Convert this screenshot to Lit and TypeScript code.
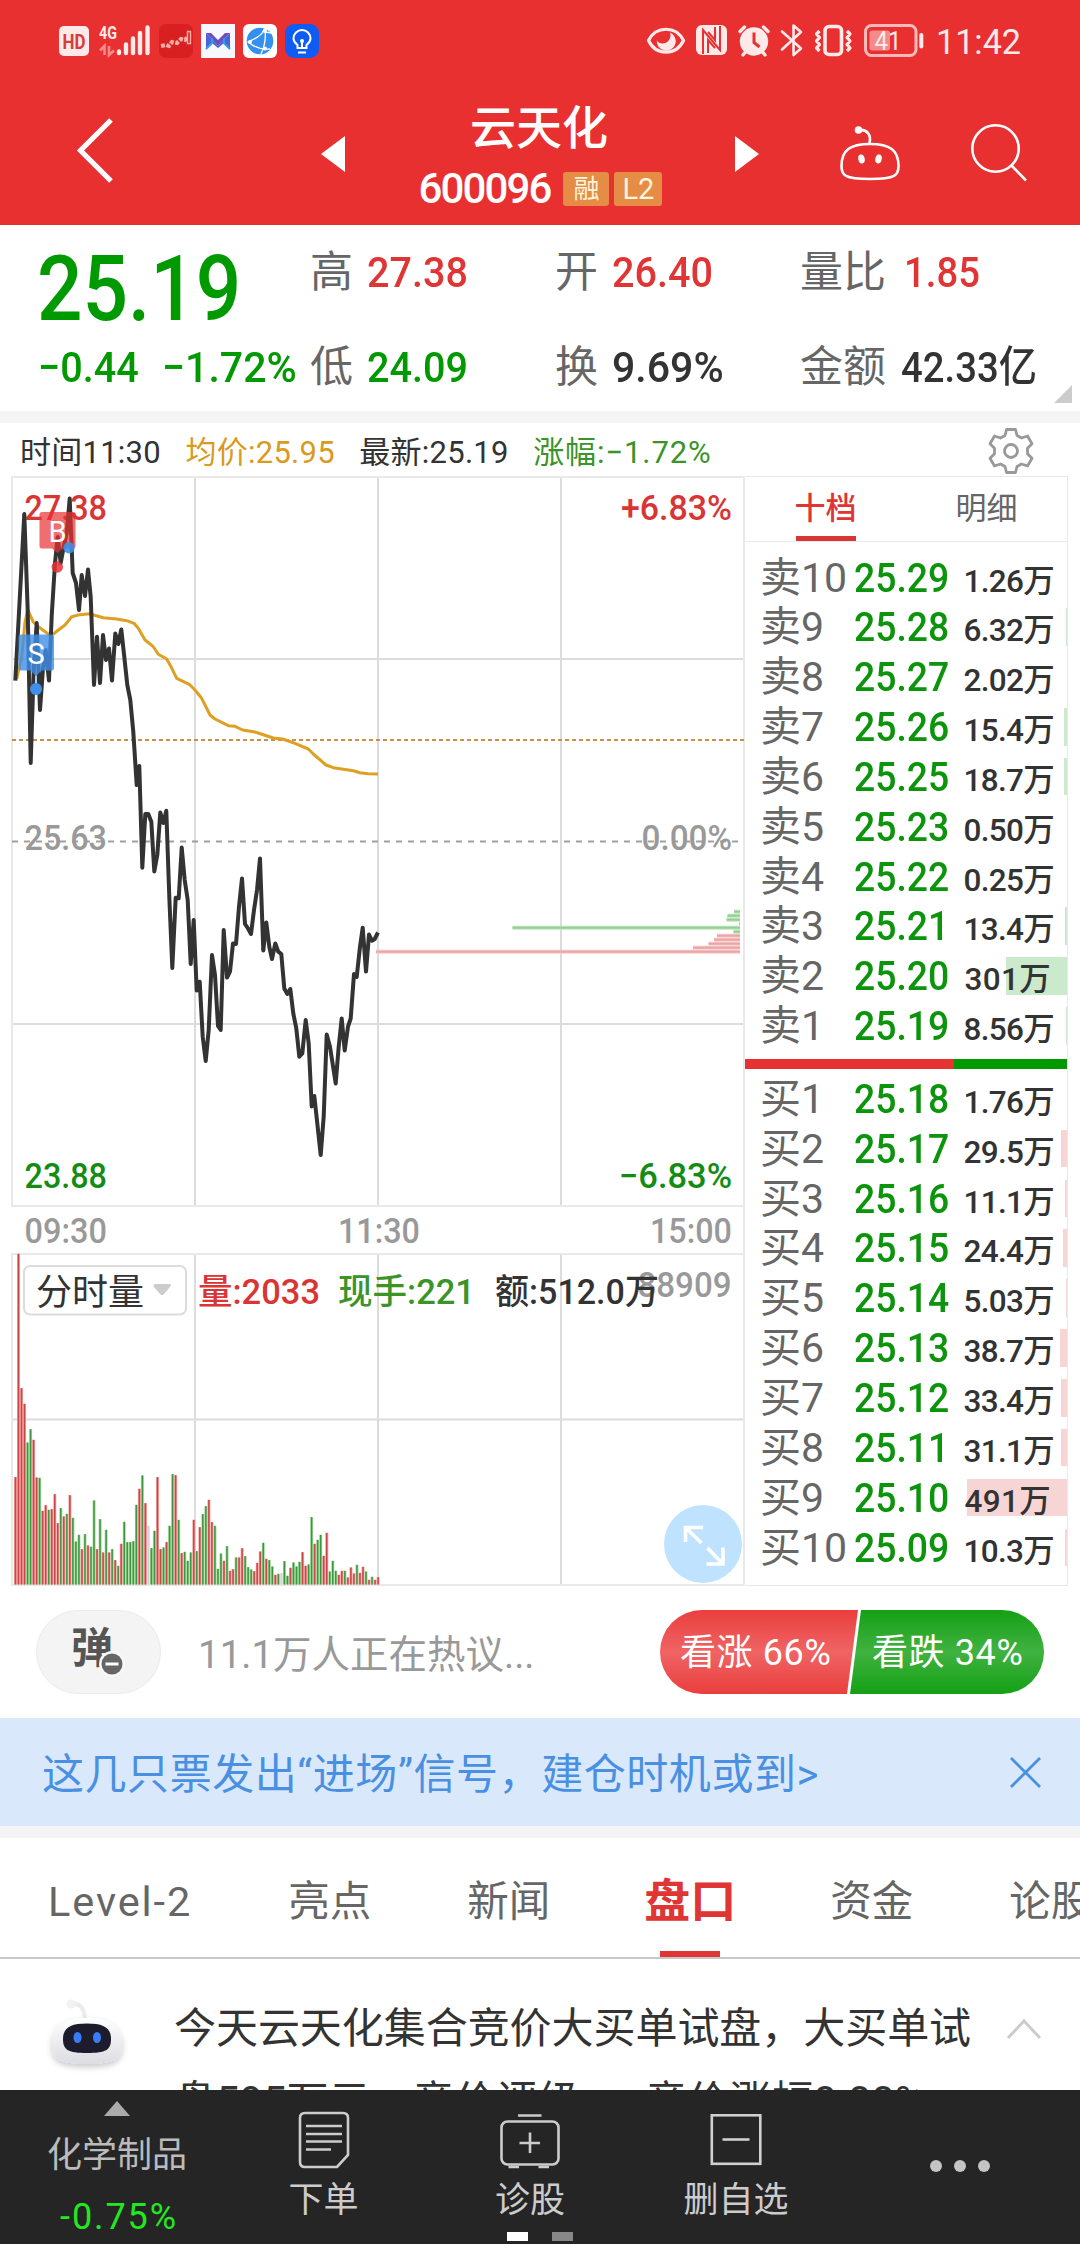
import { LitElement, html, svg, css, nothing } from "lit";
import { customElement } from "lit/decorators.js";
import { classMap } from "lit/directives/class-map.js";

/* ---------- shared styles ---------- */

const base = css`
  :host {
    display: block;
    box-sizing: border-box;
    font-family: Roboto, "Noto Sans CJK SC", sans-serif;
    color: #333;
  }
  * {
    box-sizing: border-box;
  }
  svg {
    display: block;
    flex: none;
  }
  .narrow {
    display: inline-block;
    white-space: nowrap;
    transform: scaleX(0.92);
    transform-origin: 0 50%;
  }
`;

/* ---------- header ---------- */

@customElement("stock-header")
class StockHeader extends LitElement {
  static styles = [
    base,
    css`
      :host {
        height: 225px;
        background: #e83030;
        color: #fff;
      }
      .status {
        display: flex;
        justify-content: space-between;
        align-items: center;
        height: 82px;
        padding: 0 58px 0 59px;
      }
      .nav {
        display: grid;
        grid-template-columns: 321px 24px 390px 24px 81px 60px 70px 110px;
        align-items: center;
        height: 143px;
      }
      .back {
        margin-left: 74px;
        margin-top: -7px;
      }
      .robot {
        grid-column: 6;
        margin: -2px 0 0 -1px;
      }
      .search {
        grid-column: 8;
        margin-top: -2px;
      }
      .title {
        display: flex;
        flex-direction: column;
        align-items: center;
      }
      .name {
        font-size: 46px;
        font-weight: 500;
        line-height: 62px;
        margin: 8px 2px 0 0;
      }
      .code {
        display: flex;
        align-items: center;
        height: 60px;
        margin-left: 1px;
      }
      .digits {
        font-size: 42px;
        font-weight: 500;
        letter-spacing: -1.900px;
        margin-right: 13px;
      }
      .badge {
        height: 34px;
        border-radius: 3px;
        background: #e58c45;
        color: #fff4dc;
        font-size: 26px;
        line-height: 35px;
        text-align: center;
        width: 46px;
        margin-right: 5px;
      }
      .badge.level {
        font-size: 29px;
        width: 48px;
        margin-right: 0;
      }
    `,
  ];

  render() {
    return html`
      <div class="status">
        <svg width="262" height="36" viewBox="59 23 262 36">
          <rect x="59" y="26" width="30" height="30" rx="5" fill="#ffe9e9" />
          <text x="74" y="49" font-size="20" font-weight="700" fill="#d93a3a" text-anchor="middle" textLength="23" lengthAdjust="spacingAndGlyphs">HD</text>
          <text x="99" y="38.500" font-size="18" font-weight="700" fill="#ffe9e9" textLength="18" lengthAdjust="spacingAndGlyphs">4G</text>
          <path d="M104.500 55V46L100 50.500M109 46V55L114 50.500" fill="none" stroke="#f58a8a" stroke-width="2.600" />
          <path d="M119 51.500V53M126 44.500V53M133 38.500V53M140 33V53M147.500 27.500V53" stroke="#ffe9e9" stroke-width="4.400" stroke-linecap="round" />
          <rect x="159" y="24" width="34" height="34" rx="7" fill="#d92020" />
          <path d="M161 46L166 45 169 46 172 42 177 43 181 39 185 40 190 34" fill="none" stroke="#f7b0a8" stroke-width="4" stroke-dasharray="4 1.500" />
          <path d="M187.500 31.500h3v12h-3z" fill="#d92020" stroke="#f7b0a8" stroke-width="1.400" />
          <rect x="201" y="24" width="34" height="34" fill="#f7f8ff" />
          <path d="M206 49V33L218 46 230 33V49L224 43 218 48 212 43Z" fill="#4a63d8" />
          <path d="M206 33H211L218 40 225 33H230L218 46Z" fill="#6a4fc0" />
          <path d="M206 49L212 43V38M230 49L224 43V38" fill="none" stroke="#2f9be8" stroke-width="2" />
          <rect x="243" y="24" width="34" height="34" rx="6" fill="#fff" />
          <circle cx="260" cy="41" r="13.300" fill="#3390ee" />
          <path d="M247.500 42C256 39 262 35 265 29M248 42C254 47 262 50 270 49M265 30C266 37 265 45 261 54M262 31.500L272 33" fill="none" stroke="#fff" stroke-width="1.300" />
          <circle cx="265" cy="30.500" r="2" fill="#fff" /><circle cx="250" cy="42" r="2" fill="#fff" /><circle cx="265" cy="48.500" r="2" fill="#fff" />
          <rect x="285" y="24" width="34" height="34" rx="9" fill="#0f5cf5" />
          <path d="M297.500 48V45C295 43 293.500 41 293.500 38.500a8.500 8.500 0 0 1 17 0C310.500 41 309 43 306.500 45V48Z" fill="none" stroke="#fff" stroke-width="2" />
          <path d="M298 52.500H306M302 47V41" stroke="#fff" stroke-width="2" /><circle cx="302" cy="41" r="2" fill="#fff" />
        </svg>
        <svg width="375" height="36" viewBox="648 23 375 36">
          <g fill="none" stroke="#ffe9e9">
            <path d="M649.500 40.500C657 25.500 677 25.500 684.500 40.500 677 56 657 56 649.500 40.500Z" stroke-width="3.200" />
            <path d="M671 32.500a9.500 9.500 0 1 1-13.200 8c2 3.500 8 4 11 1 2.500-2.500 3.500-6 2.200-9Z" fill="#ffe9e9" stroke="none" />
            <rect x="697" y="25" width="31" height="30" rx="6" fill="#ffe9e9" stroke="none" />
            <path d="M704 54V30L721 50V26" stroke="#e83030" stroke-width="2" />
            <path d="M709 53V40L716 48M716 27V40L709 32" stroke="#e83030" stroke-width="2" />
            <circle cx="755" cy="41.500" r="14.200" fill="#ffe9e9" stroke="none" />
            <path d="M741 31.500L745.500 27M769 31.500L764.500 27M744 55L748 50M766 55L762 50" stroke-width="3.400" stroke-linecap="round" />
            <path d="M755 32.500V42.500L760.500 47" stroke="#e83030" stroke-width="3" />
            <path d="M783 31.500L802 48.500 794.500 55V25.500L802 32 783 49.500" stroke-width="2.600" stroke-linejoin="round" stroke-linecap="round" />
            <rect x="826" y="26.500" width="16.500" height="28" rx="4" stroke-width="3.600" />
            <path d="M820.500 31L817.500 34 820.500 37.500 817.500 41 820.500 44.500 817.500 48 820.500 51M848 31L851 34 848 37.500 851 41 848 44.500 851 48 848 51" stroke-width="3.200" stroke-linejoin="round" />
            <rect x="866.500" y="25.500" width="50.500" height="30" rx="6" stroke="#fbb9b9" stroke-width="3" />
            <rect x="870.500" y="30.500" width="20.500" height="20" rx="3" fill="#f58a8a" stroke="none" />
            <path d="M922.300 35V46.500" stroke-width="4" stroke-linecap="round" />
          </g>
          <text x="889" y="49.500" font-size="26" fill="#ffe9e9" text-anchor="middle" textLength="27" lengthAdjust="spacingAndGlyphs">41</text>
          <text x="937" y="54" font-size="35.500" fill="#ffe9e9" textLength="85" lengthAdjust="spacingAndGlyphs">11:42</text>
        </svg>
      </div>
      <div class="nav">
        <svg class="back" width="44" height="72" viewBox="74 114 44 72">
          <path d="M111 120L80.500 150.500 111 181" fill="none" stroke="#fff" stroke-width="5.200" />
        </svg>
        <svg width="24" height="36" viewBox="0 0 24 36"><path d="M24 0V36L0 18Z" fill="#fff" /></svg>
        <div class="title">
          <div class="name">云天化</div>
          <div class="code">
            <span class="digits">600096</span><span class="badge">融</span><span class="badge level">L2</span>
          </div>
        </div>
        <svg width="24" height="36" viewBox="0 0 24 36"><path d="M0 0V36L24 18Z" fill="#fff" /></svg>
        <svg class="robot" width="62" height="58" viewBox="839 125 62 58">
          <path d="M870 145C890 145 898.500 151 898.500 167 898.500 176 896 180 870 180S841.500 176 841.500 167C841.500 151 850 145 870 145Z" fill="none" stroke="#fff" stroke-width="2.600" />
          <path d="M859 131C867 130 871.500 136 869.500 144" fill="none" stroke="#fff" stroke-width="2.600" />
          <circle cx="858.500" cy="131" r="3.800" fill="#fff" />
          <ellipse cx="861.500" cy="160" rx="3.200" ry="4.500" fill="#fff" transform="rotate(-12 861.500 160)" />
          <ellipse cx="878.500" cy="160" rx="3.200" ry="4.500" fill="#fff" transform="rotate(12 878.500 160)" />
        </svg>
        <svg class="search" width="60" height="60" viewBox="969 123 60 60">
          <g fill="none" stroke="#fff" stroke-width="2.600"><circle cx="994.500" cy="148.500" r="23.200" /><path d="M1010.500 165.500L1025 180.500" /></g>
        </svg>
      </div>
    `;
  }
}

/* ---------- quote figures ---------- */

@customElement("quote-stats")
class QuoteStats extends LitElement {
  static styles = [
    base,
    css`
      :host {
        position: relative;
        height: 198px;
        padding: 4px 0 0 38px;
        border-bottom: 12px solid #f4f4f4;
        background: #fff;
      }
      .grid {
        display: grid;
        grid-template-columns: 272px 245px 245px 260px;
        grid-template-rows: 86px 100px;
      }
      .cell {
        display: flex;
        align-items: center;
        font-size: 43px;
        line-height: 50px;
        white-space: nowrap;
      }
      .top {
        height: 86px;
      }
      .low {
        height: 100px;
        padding-top: 4px;
      }
      .label {
        color: #666;
        margin-right: 14px;
      }
      .value {
        font-weight: 500;
      }
      .wide {
        transform: scaleX(0.955);
      }
      .tight {
        transform: scaleX(0.89);
        margin-left: 1px;
      }
      .ratio {
        transform: scaleX(0.89);
        margin-left: 4px;
      }
      .up {
        color: #e03535;
      }
      .down {
        color: #009900;
      }
      .price {
        font-size: 91px;
        font-weight: 500;
        line-height: 90px;
        transform: scaleX(0.88);
        padding-top: 33px;
        margin-left: -1px;
      }
      .change {
        display: grid;
        grid-template-columns: 124px 148px;
      }
      .corner {
        position: absolute;
        right: 8px;
        bottom: 8px;
      }
    `,
  ];

  render() {
    const cell = (label: string, value: string, tone: string, row: string) => html`
      <div class="cell ${row}"><span class="label">${label}</span><span class="value narrow ${tone}">${value}</span></div>
    `;
    return html`
      <div class="grid">
        <div class="cell top"><span class="narrow price down">25.19</span></div>
        ${cell("高", "27.38", "up", "top")} ${cell("开", "26.40", "up", "top")} ${cell("量比", "1.85", "up ratio", "top")}
        <div class="cell low change value down"><span class="narrow">−0.44</span><span class="narrow wide">−1.72%</span></div>
        ${cell("低", "24.09", "down", "low")} ${cell("换", "9.69%", "wide", "low")} ${cell("金额", "42.33亿", "tight", "low")}
      </div>
      <svg class="corner" width="18" height="18" viewBox="0 0 18 18"><path d="M18 0V18H0Z" fill="#ccc" /></svg>
    `;
  }
}

/* ---------- intraday chart ---------- */

type Point = [number, number];

const PRICE: Point[] = (
  "15.3,680.6 24.3,514 27.7,610 30.7,763 33.7,670 36.7,623 40,710 43,668 45.7,650 49,680.6 51.700,616 55,563 57.7,537 60.7,563 63.700,547 66.7,533 69.700,498.500 72.7,573 76,583 79,610 81.7,575 85,596 88,569.500 90.7,597 94,685 97,636.700 100,683 103,635 106,660 109,648.500 112,680.600 115.300,633.500 118.300,644 121.300,629.500 124.300,657 127.300,685 130.300,700 133.300,732 136.700,785 139.300,766 " +
  "142.300,867.700 145.300,814 148.300,814 151.300,821.700 154.300,871.500 157.300,855 160.300,812.500 163.300,823 166.300,810.700 169.300,897 172.300,968 175.700,897.700 178.700,898.300 181.700,847.500 184.700,880 187.700,900 190.700,964 193.700,920 196.700,990.500 199.700,981.700 202.700,1036.700 205.700,1061 208.700,1030 212,955 215,975 218,1026 220.700,1030 223.700,930 227,977.500 230,971.500 233,943.500 236,944 239,906.700 242,878.500 245,924 248,928.500 251,934 254,910 257,890 260,858.500 263.300,950.500 266.300,922.500 269.300,946.700 272,959 275.300,943.500 278.300,951.700 281.300,954 284.300,988.500 287.300,994 290.300,989 293.300,1013.500 296.300,1028.500 299.300,1056.700 302.300,1053.500 305.700,1020 308.700,1043.500 311.700,1106.500 314.300,1096 317.300,1123.500 320.700,1155 323.700,1116.700 326.700,1034.500 330,1046.700 335.700,1083.500 338.700,1046.700 341.700,1018.500 344.700,1050.500 348,1026.700 350.700,1018.500 354,974 356.700,977 360,946.700 362.700,927.700 366,971.500 369,934.500 372,940.700 374.700,939 378,932.500"
)
  .split(" ")
  .map((p) => p.split(",").map(Number) as Point);

const AVERAGE: Point[] = (
  "16.7,679 21.700,657 25,622 27.700,610 33.300,622 40,628 48.300,634 53.300,634 65,625 71.700,616.700 78.300,615 89.300,613.700 103.300,617.700 116.700,619 126.700,620.700 134,623.300 138.300,628.300 145,640 153.300,646.700 158.300,654.300 166.700,659 171,666.700 176.700,678.300 189.300,684.300 195,690 201.700,698.300 210,715 215,719 228.300,725.700 235,726.300 242.700,730 255,732 273.300,738 282.700,739 295,743.300 308.300,749 313.300,754 326,765 333.300,767.700 353.300,770.700 360,772.700 368.300,773.700 378,774"
)
  .split(" ")
  .map((p) => p.split(",").map(Number) as Point);

/* One entry a minute: bar height in thirds of a pixel, then r (up), g (down) or n (flat). */
const VOLUME =
  "322r 992r 589r 542r 426g 466g 434r 321r 320g 221r 238r 224g 226r 271r 184r 229g 204r 212g 268r 200g 129g 149g 106r 151g 117r 113g 252g 106r 196g 96r 164g 96r 106g 73r 56g 122r 188g 127g 127g 130g 239g 287r 327g 244r 176n 109g 161g 322r 106r 111g 127r 176g 331g 328r 194g 94r 98g 71g 96g 194r 100g 172r 211g 235g 254r 187r 176g 47g 93g 71r 115g 41r 46r 81g 81r 109r 85g 52g 45g 40r 65r 99r 125g 77r 73g 54g 29r 32g 34n 70g 26g 50r 66g 54g 68g 97r 56r 60g 202g 122r 134g 149g 86r 155r 39g 71g 41g 29r 41r 41g 21r 51r 33r 59g 35r 53r 39g 14r 23g 14r 22r"
    .split(" ")
    .map((v) => ({ size: parseInt(v, 10) / 3, kind: v.slice(-1) }));

const VOLUME_TINT: Record<string, [string, string]> = {
  r: ["#f5a3a3", "#c84848"],
  g: ["#a6dba0", "#3f9640"],
  n: ["#e6e6e6", "#d2d2d2"],
};

/* Left edge of each resting-order bar, top to bottom. */
const DEPTH: [number, string][] = [
  [734, "g"],
  [727.5, "g"],
  [726.500, "g"],
  [739, "g"],
  [512.500, "g"],
  [733.500, "g"],
  [717, "r"],
  [714, "r"],
  [708.500, "r"],
  [693, "r"],
  [376, "r"],
];

@customElement("trend-chart")
class TrendChart extends LitElement {
  static styles = [
    base,
    css`
      :host {
        width: 745px;
        height: 1110px;
      }
      .axis {
        font-size: 35px;
        font-weight: 500;
      }
      .red {
        fill: #d93535;
      }
      .green {
        fill: #128c12;
      }
      .grey {
        fill: #999;
      }
      .dark {
        fill: #333;
      }
      .leaf {
        fill: #3a9428;
      }
      .flag {
        font-size: 29px;
        fill: #fff;
        text-anchor: middle;
      }
    `,
  ];

  private label(text: string, x1: number, x2: number, y: number, tone: string) {
    return svg`<text class="axis ${tone}" x=${x1} y=${y} textLength=${x2 - x1} lengthAdjust="spacingAndGlyphs">${text}</text>`;
  }

  render() {
    const line = (pts: Point[]) => pts.map((p) => p.join(",")).join(" ");
    return html`
      <svg width="745" height="1110" viewBox="0 476 745 1110">
        <g stroke="#dcdcdc" stroke-width="2" fill="none">
          <path d="M195 478V1206M378 478V1206M561 478V1206M13 659H744M13 1024H744M195 1254V1585M378 1254V1585M561 1254V1585M13 1419.500H744" />
          <path d="M744 477H12V1206H744M744 1254H12V1585H744M744 477V1585" stroke="#e9e9e9" />
        </g>
        <path d="M12 740H744" stroke="#c98f45" stroke-width="2" stroke-dasharray="4 3" />
        <path d="M12 841.500H739" stroke="#a0a0a0" stroke-width="2" stroke-dasharray="6 6" />

        ${this.label("27.38", 24.500, 107, 520, "red")} ${this.label("+6.83%", 621, 732, 520, "red")}
        ${this.label("25.63", 24.500, 107, 850, "grey")} ${this.label("0.00%", 641.500, 732, 850, "grey")}
        ${this.label("23.88", 24.500, 107, 1188, "green")} ${this.label("−6.83%", 619, 732, 1188, "green")}
        ${this.label("09:30", 24.500, 107, 1243, "grey")} ${this.label("11:30", 338, 420, 1243, "grey")}
        ${this.label("15:00", 650, 732, 1243, "grey")}

        ${DEPTH.map(([x, kind], i) => {
          const y = 909.7 + i * 4;
          return svg`
            <rect x=${x} y=${y} width=${740 - x} height="4" fill=${kind === "g" ? "#bdeabd" : "#fbcaca"} />
            <rect x=${x} y=${y + 1} width=${740 - x} height="2" fill=${kind === "g" ? "#98cc98" : "#e8a6a6"} />`;
        })}

        <polyline points=${line(AVERAGE)} fill="none" stroke="#dda022" stroke-width="3" stroke-linejoin="round" />
        <polyline points=${line(PRICE)} fill="none" stroke="#333" stroke-width="4" stroke-linejoin="round" />

        <g fill="#e83030">
          <path d="M42 512H73a2.500 2.500 0 0 1 2.500 2.500V546a2.500 2.500 0 0 1-2.500 2.500H63L57.500 553 52 548.500H42a2.500 2.500 0 0 1-2.500-2.500V514.500A2.500 2.500 0 0 1 42 512Z" opacity="0.700" />
          <circle cx="57.300" cy="567" r="5.700" opacity="0.850" />
        </g>
        <g fill="#3f8fe8">
          <circle cx="69" cy="547.700" r="5.700" opacity="0.900" />
          <path d="M21 634.500H51.500a2.500 2.500 0 0 1 2.500 2.500V668a2.500 2.500 0 0 1-2.500 2.500H41.500L36 676 30.500 670.500H21a2.500 2.500 0 0 1-2.500-2.500V637A2.500 2.500 0 0 1 21 634.500Z" opacity="0.800" />
          <path d="M36 676V689" stroke="#a9cdf5" stroke-width="2" />
          <circle cx="36" cy="689" r="6" />
        </g>
        <text class="flag" x="57.500" y="542">B</text>
        <text class="flag" x="36" y="664">S</text>

        ${VOLUME.map(({ size, kind }, i) => {
          const x = 14 + i * 3.022;
          const [soft, core] = VOLUME_TINT[kind];
          return svg`
            <rect x=${x} y=${1584.5 - size} width="3" height=${size} fill=${soft} />
            <rect x=${x + 0.7} y=${1584.5 - size} width="1.500" height=${size} fill=${core} />`;
        })}

        <rect x="24" y="1266" width="162" height="48.500" rx="6" fill="#fff" stroke="#dcdcdc" stroke-width="2" />
        <text class="dark" x="36" y="1304.500" font-size="36">分时量</text>
        <path d="M155 1284H169.500Q172 1285 170 1287L163.500 1294.500Q162 1295.500 160.500 1294.500L154 1287Q152.500 1285 155 1284Z" fill="#ccc" />
        ${this.label("88909", 637.500, 731.500, 1297, "grey")}
        ${this.label("量:2033", 198, 320, 1303.500, "red")} ${this.label("现手:221", 338, 475, 1303.500, "leaf")}
        ${this.label("额:512.0万", 495, 659, 1303.500, "dark")}

        <circle cx="703" cy="1544" r="39" fill="#bfe3ff" />
        <path d="M685.500 1542V1527.500H703M686 1528L701.500 1543M723 1547.500V1564H706.500M722.500 1563.500L707.500 1548" fill="none" stroke="#fff" stroke-width="3.600" />
      </svg>
    `;
  }
}

/* ---------- order book ---------- */

type Level = [string, string, string, number];

const SELLS: Level[] = [
  ["卖10", "25.29", "1.26万", 0],
  ["卖9", "25.28", "6.32万", 1],
  ["卖8", "25.27", "2.02万", 0],
  ["卖7", "25.26", "15.4万", 3],
  ["卖6", "25.25", "18.7万", 3],
  ["卖5", "25.23", "0.50万", 0],
  ["卖4", "25.22", "0.25万", 0],
  ["卖3", "25.21", "13.4万", 2],
  ["卖2", "25.20", "301万", 61],
  ["卖1", "25.19", "8.56万", 1],
];

const BUYS: Level[] = [
  ["买1", "25.18", "1.76万", 0],
  ["买2", "25.17", "29.5万", 6],
  ["买3", "25.16", "11.1万", 2],
  ["买4", "25.15", "24.4万", 4],
  ["买5", "25.14", "5.03万", 1],
  ["买6", "25.13", "38.7万", 7],
  ["买7", "25.12", "33.4万", 6],
  ["买8", "25.11", "31.1万", 6],
  ["买9", "25.10", "491万", 100],
  ["买10", "25.09", "10.3万", 2],
];

@customElement("order-book")
class OrderBook extends LitElement {
  static styles = [
    base,
    css`
      :host {
        width: 323px;
        height: 1110px;
        border: 1px solid #e9e9e9;
        border-width: 1px 1px 1px 0;
      }
      .tabs {
        display: grid;
        grid-template-columns: 1fr 1fr;
        justify-items: center;
        height: 65px;
        border-bottom: 1px solid #e9e9e9;
        font-size: 31px;
        line-height: 63px;
        color: #666;
        white-space: nowrap;
      }
      .tab {
        height: 64px;
      }
      .tab.active {
        color: #e03535;
        font-weight: 500;
        border-bottom: 5px solid #d93535;
        width: 60px;
        display: flex;
        justify-content: center;
      }
      .side {
        padding-top: 10.500px;
      }
      .buy {
        padding-top: 5px;
      }
      .row {
        position: relative;
        display: grid;
        grid-template-columns: 94px 96px 1fr;
        height: 49.850px;
        line-height: 50px;
        padding: 0 13px 0 15px;
      }
      .level {
        font-size: 41px;
        color: #666;
        white-space: nowrap;
      }
      .price {
        font-size: 41px;
        font-weight: 500;
        color: #0c940c;
        transform: scaleX(0.91);
      }
      .qty {
        font-size: 31.500px;
        font-weight: 500;
        text-align: right;
        padding-top: 4px;
        letter-spacing: -0.700px;
        white-space: nowrap;
      }
      .qty.whole {
        letter-spacing: 0.300px;
        padding-right: 3px;
      }
      .bar {
        position: absolute;
        right: 0;
        top: 6px;
        height: 37.500px;
        background: #cbe9cb;
      }
      .buy .bar {
        background: #f7d5d5;
      }
      .row > span {
        position: relative;
      }
      .ratio {
        display: grid;
        grid-template-columns: 208.500px 1fr;
        height: 10px;
        margin-top: 8px;
      }
      .ratio .bid {
        background: #e63232;
      }
      .ratio .ask {
        background: #009900;
      }
    `,
  ];

  private rows(levels: Level[]) {
    return levels.map(
      ([level, price, qty, width]) => html`
        <div class="row">
          ${width ? html`<div class="bar" style="width:${width}px"></div>` : nothing}
          <span class="level">${level}</span>
          <span class="price narrow">${price}</span>
          <span class=${classMap({ qty: true, whole: !qty.includes(".") })}>${qty}</span>
        </div>
      `
    );
  }

  render() {
    return html`
      <div class="tabs">
        <div class="tab active">十档</div>
        <div class="tab">明细</div>
      </div>
      <div class="side">${this.rows(SELLS)}</div>
      <div class="ratio"><div class="bid"></div><div class="ask"></div></div>
      <div class="side buy">${this.rows(BUYS)}</div>
    `;
  }
}

/* ---------- bottom bar ---------- */

@customElement("bottom-nav")
class BottomNav extends LitElement {
  static styles = [
    base,
    css`
      :host {
        position: relative;
        height: 154px;
        background: #252525;
        color: #ccc;
      }
      .items {
        display: grid;
        grid-template-columns: 14px 206px 207px 206px 206px 241px;
        height: 154px;
      }
      .item {
        display: flex;
        flex-direction: column;
        align-items: center;
        font-size: 35px;
        line-height: 44px;
      }
      .sector {
        grid-column: 2;
        padding-top: 11px;
        color: #bbb;
      }
      .sector .name {
        margin-top: 18px;
      }
      .sector .change {
        color: #22e822;
        margin: 17px 0 0 4px;
        font-size: 36px;
        letter-spacing: 1.900px;
      }
      .tool {
        padding-top: 20px;
      }
      .tool .name {
        margin-top: 9px;
      }
      .more {
        padding-top: 69px;
        padding-left: 0;
      }
      .pages {
        position: absolute;
        left: 507px;
        top: 142px;
        display: flex;
        gap: 24px;
      }
      .page {
        width: 21px;
        height: 9px;
        background: #888;
      }
      .page.current {
        background: #fff;
      }
    `,
  ];

  render() {
    return html`
      <div class="items">
        <div class="item sector">
          <svg width="26" height="15" viewBox="0 0 26 15"><path d="M13 0L26 15H0Z" fill="#aaa" /></svg>
          <span class="name">化学制品</span>
          <span class="change">-0.75%</span>
        </div>
        <div class="item tool">
          <svg width="54" height="60" viewBox="297 2110 54 60">
            <g fill="none" stroke="#ccc" stroke-width="2.600">
              <path d="M305 2113H343Q348 2113 348 2118V2155L337 2167H305Q300 2167 300 2162V2118Q300 2113 305 2113Z" />
              <path d="M306 2126H342M306 2134H342M306 2141.500H342M306 2149.500H331" />
            </g>
          </svg>
          <span class="name">下单</span>
        </div>
        <div class="item tool">
          <svg width="62" height="60" viewBox="499.500 2110 62 60">
            <g fill="none" stroke="#ccc" stroke-width="2.600">
              <rect x="502" y="2121.500" width="57" height="43" rx="6" />
              <path d="M518.500 2115.500H542M530.500 2132.500V2153M520 2143H540.500M509 2167H519.500M539 2167H549.500" />
            </g>
          </svg>
          <span class="name">诊股</span>
        </div>
        <div class="item tool">
          <svg width="54" height="60" viewBox="708.500 2110 54 60">
            <g fill="none" stroke="#d0d0d0" stroke-width="2.600"><rect x="711.300" y="2115.300" width="48.500" height="48.500" /><path d="M722 2139.500H749" /></g>
          </svg>
          <span class="name">删自选</span>
        </div>
        <div class="item more">
          <svg width="60" height="14" viewBox="0 0 60 14"><g fill="#c4c4c4"><circle cx="6" cy="7" r="6" /><circle cx="30" cy="7" r="6" /><circle cx="54" cy="7" r="6" /></g></svg>
        </div>
      </div>
      <div class="pages"><div class="page current"></div><div class="page"></div></div>
    `;
  }
}

/* ---------- page ---------- */

@customElement("app-root")
class AppRoot extends LitElement {
  static styles = [
    base,
    css`
      :host {
        width: 1080px;
        height: 2244px;
        overflow: hidden;
        background: #fff;
      }
      .legend {
        display: flex;
        align-items: center;
        gap: 24.500px;
        height: 53px;
        padding: 0 46px 0 20px;
        font-size: 31px;
        letter-spacing: 0.250px;
        white-space: nowrap;
      }
      .average {
        color: #d99a20;
      }
      .rate {
        color: #3a9428;
        letter-spacing: 0.900px;
      }
      .gear {
        margin: 2px 0 0 auto;
      }
      .market {
        display: flex;
        height: 1110px;
      }
      .talk {
        display: flex;
        align-items: center;
        height: 132px;
        padding: 0 36px 0 36px;
      }
      .danmu {
        position: relative;
        width: 125px;
        height: 84px;
        border: 1px solid #ececec;
        border-radius: 42px;
        background: #f4f4f4;
        color: #555;
        font-size: 42px;
        font-weight: 700;
        line-height: 76px;
        padding-left: 34px;
      }
      .mute {
        position: absolute;
        left: 61px;
        top: 39px;
      }
      .hint {
        margin: -3px 0 0 37px;
        font-size: 38.500px;
        color: #999;
      }
      .vote {
        display: flex;
        width: 384px;
        height: 84px;
        margin-left: auto;
        font-size: 36px;
        letter-spacing: 0.600px;
        line-height: 87px;
        color: #fff;
      }
      .bull {
        width: 198px;
        padding-left: 20px;
        border-radius: 42px 0 0 42px;
        background: linear-gradient(#ea3e3e, #f06464 50%, #ea3e3e);
        clip-path: polygon(0 0, 100% 0, 187px 100%, 0 100%);
      }
      .bear {
        width: 194px;
        margin-left: -8px;
        padding-left: 22px;
        border-radius: 0 42px 42px 0;
        background: linear-gradient(#15a015, #40b240 50%, #15a015);
        clip-path: polygon(11px 0, 100% 0, 100% 100%, 0 100%);
      }
      .notice {
        display: flex;
        align-items: center;
        justify-content: space-between;
        height: 108px;
        padding: 0 39px 0 42px;
        background: #dae8fb;
        color: #4a90e2;
        font-size: 42px;
        letter-spacing: 0.560px;
        white-space: nowrap;
      }
      .notice span {
        margin-top: -4px;
      }
      .sections {
        display: flex;
        align-items: center;
        gap: 96px;
        height: 133px;
        border-top: 12px solid #f4f4f4;
        border-bottom: 2px solid #c8c8c8;
        padding-left: 48px;
        font-size: 41.500px;
        color: #666;
        white-space: nowrap;
        overflow: hidden;
      }
      .section {
        line-height: 119px;
        height: 119px;
        padding-top: 4px;
        flex: none;
      }
      .section.latin {
        letter-spacing: 1.900px;
      }
      .section.active {
        position: relative;
        margin: 0 -2px;
        font-size: 46px;
        font-weight: 700;
        color: #e03535;
      }
      .section.active::after {
        content: "";
        position: absolute;
        left: 50%;
        bottom: 0;
        width: 60px;
        height: 6px;
        margin-left: -30px;
        background: #e03535;
      }
      .digest {
        display: flex;
        height: 131px;
        overflow: hidden;
        padding: 32px 38px 0 46px;
      }
      .body {
        width: 810px;
        margin: 1px 0 0 44px;
        font-size: 42px;
        line-height: 73px;
        letter-spacing: -0.050px;
        white-space: nowrap;
      }
      .fold {
        margin: 26px 0 0 auto;
      }
    `,
  ];

  render() {
    const sections = ["Level-2", "亮点", "新闻", "盘口", "资金", "论股"];
    return html`
      <stock-header></stock-header>
      <quote-stats></quote-stats>
      <div class="legend">
        <span>时间11:30</span>
        <span class="average">均价:25.95</span>
        <span>最新:25.19</span>
        <span class="rate">涨幅:−1.72%</span>
        <svg class="gear" width="46" height="48" viewBox="-23 -24 46 48">
          <path
            d="M-4.500 -21.500H4.500L6 -15.500 10.500 -13 16.500 -15 21 -7.200 16.500 -2.800V2.800L21 7.200 16.500 15 10.500 13 6 15.500 4.500 21.500H-4.500L-6 15.500 -10.500 13 -16.500 15 -21 7.200 -16.500 2.800V-2.800L-21 -7.200 -16.500 -15 -10.500 -13 -6 -15.500Z"
            fill="none" stroke="#999" stroke-width="2.800" stroke-linejoin="round" />
          <circle r="6.500" fill="none" stroke="#999" stroke-width="2.800" />
        </svg>
      </div>
      <div class="market">
        <trend-chart></trend-chart>
        <order-book></order-book>
      </div>
      <div class="talk">
        <div class="danmu">
          弹
          <svg class="mute" width="28" height="28" viewBox="-14 -14 28 28">
            <circle r="13" fill="#f8f8f8" /><circle r="10.500" fill="#666" /><path d="M-6.500 0H6.500" stroke="#fff" stroke-width="3" />
          </svg>
        </div>
        <div class="hint">11.1万人正在热议...</div>
        <div class="vote">
          <div class="bull">看涨 66%</div>
          <div class="bear">看跌 34%</div>
        </div>
      </div>
      <div class="notice">
        <span>这几只票发出“进场”信号，建仓时机或到&gt;</span>
        <svg width="31" height="31" viewBox="0 0 31 31"><path d="M1 1L30 30M30 1L1 30" stroke="#4a90e2" stroke-width="2.800" /></svg>
      </div>
      <div class="sections">
        ${sections.map(
          (name) => html`<div class=${classMap({ section: true, latin: name === "Level-2", active: name === "盘口" })}>${name}</div>`
        )}
      </div>
      <div class="digest">
        <svg width="84" height="92" viewBox="46 1988 84 92">
          <defs>
            <linearGradient id="shell" x1="0" y1="0" x2="0" y2="1"><stop offset="0" stop-color="#fff" /><stop offset="1" stop-color="#dcdce2" /></linearGradient>
            <filter id="soft" x="-20%" y="-20%" width="140%" height="150%"><feDropShadow dx="0" dy="3" stdDeviation="3" flood-color="#000" flood-opacity="0.220" /></filter>
          </defs>
          <path d="M70 2001C79 1999 85 2005 85 2017" fill="none" stroke="#ececee" stroke-width="4" />
          <circle cx="71" cy="2001" r="4.500" fill="#f2f2f4" />
          <path d="M87 2015C109 2015 122 2023 122 2041 122 2055 117 2061 87 2061S52 2055 52 2041C52 2023 65 2015 87 2015Z" fill="url(#shell)" filter="url(#soft)" />
          <path d="M87 2020.500C104 2020.500 111 2025 111 2036 111 2047 106 2050 87 2050S63 2047 63 2036C63 2025 70 2020.500 87 2020.500Z" fill="#1d1c2c" />
          <ellipse cx="77.500" cy="2034.500" rx="4" ry="5.500" fill="#3a7cf5" /><ellipse cx="97" cy="2034.500" rx="4" ry="5.500" fill="#3a7cf5" />
        </svg>
        <div class="body">
          <div>今天云天化集合竞价大买单试盘，大买单试</div>
          <div>盘595万元，竞价评级--，竞价涨幅0.00%</div>
        </div>
        <svg class="fold" width="36" height="24" viewBox="0 0 36 24"><path d="M2 21L18 4 34 21" fill="none" stroke="#ccc" stroke-width="3" /></svg>
      </div>
      <bottom-nav></bottom-nav>
    `;
  }
}
